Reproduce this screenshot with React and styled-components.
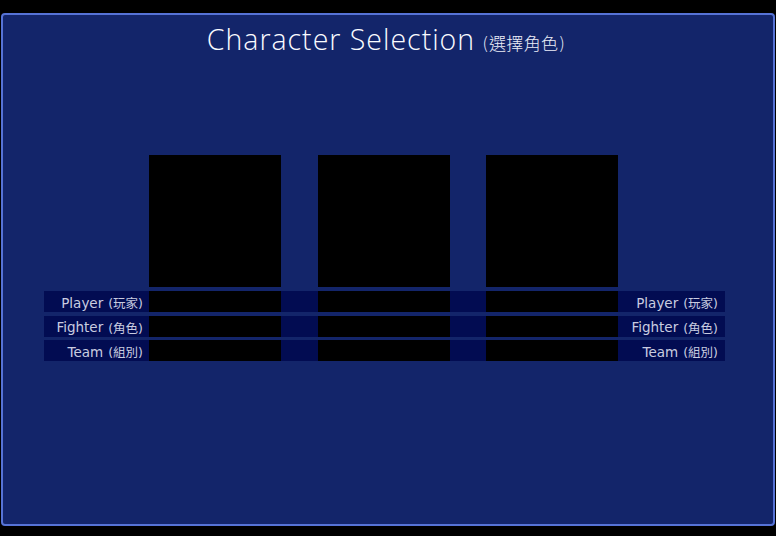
import React from 'react';
import styled, {createGlobalStyle} from 'styled-components';

const GlobalStyle = createGlobalStyle`
    html, body {
        margin: 0;
        padding: 0;
        background: #000;
    }
    body {
        font-family: "DejaVu Sans", Verdana, sans-serif;
    }
`;

const Screen = styled.div`
    width: 776px;
    height: 536px;
    box-sizing: border-box;
    padding: 13px 1px 10px 1px;
    background: #000;
`;

const Panel = styled.div`
    height: 100%;
    box-sizing: border-box;
    border: 2px solid #5673d6;
    border-radius: 4px;
    background: #13256a;
    display: flex;
    flex-direction: column;
`;

const Title = styled.h1`
    margin: 0;
    padding: 5px 4px 0 0;
    text-align: center;
    color: #fafbff;
    font-family: "Open Sans", "Noto Sans CJK TC", sans-serif;
    font-weight: 300;
    font-size: 28.5px;
    line-height: 38px;
    letter-spacing: 1px;
`;

const TitleSub = styled.span`
    font-family: "DejaVu Sans", "Noto Sans CJK TC", sans-serif;
    font-size: 17px;
    margin-left: 7px;
    letter-spacing: 0.3px;
    color: #eceef8;
`;

const Board = styled.div`
    margin: 92px 0 0 41px;
    width: 681px;
    display: flex;
    flex-direction: column;
`;

const Grid = styled.div`
    display: grid;
    grid-template-columns: 105px 132px 37px 132px 36px 132px 107px;
`;

const Portraits = styled(Grid)`
    height: 132px;
    margin-bottom: 4px;
`;

const Portrait = styled.div`
    grid-column: ${p => p.col};
    background: #000;
`;

const Rows = styled.div`
    display: flex;
    flex-direction: column;
    gap: 3.5px;
`;

const Row = styled(Grid)`
    height: 21px;
    background: #020c52;
`;

const Label = styled.div`
    display: flex;
    align-items: center;
    justify-content: flex-end;
    padding-right: ${p => p.pad}px;
    padding-top: 2px;
    color: #c9cce0;
    font-size: 13.5px;
    white-space: nowrap;
`;

const LabelSub = styled.span`
    font-family: "DejaVu Sans", "Noto Sans CJK TC", sans-serif;
    font-size: 12.5px;
    margin-left: 5px;
`;

const Slot = styled.div`
    background: #000;
`;

const Spacer = styled.div``;

const fields = [
    {name: 'Player', zh: '(玩家)'},
    {name: 'Fighter', zh: '(角色)'},
    {name: 'Team', zh: '(組別)'},
];

export default function App() {
    return (
        <Screen>
            <GlobalStyle />
            <Panel>
                <Title>
                    Character Selection
                    <TitleSub>(選擇角色)</TitleSub>
                </Title>
                <Board>
                    <Portraits>
                        <Portrait col={2} />
                        <Portrait col={4} />
                        <Portrait col={6} />
                    </Portraits>
                    <Rows>
                        {fields.map(f => (
                            <Row key={f.name}>
                                <Label pad={6}>
                                    {f.name}<LabelSub>{f.zh}</LabelSub>
                                </Label>
                                <Slot />
                                <Spacer />
                                <Slot />
                                <Spacer />
                                <Slot />
                                <Label pad={7}>
                                    {f.name}<LabelSub>{f.zh}</LabelSub>
                                </Label>
                            </Row>
                        ))}
                    </Rows>
                </Board>
            </Panel>
        </Screen>
    );
}
